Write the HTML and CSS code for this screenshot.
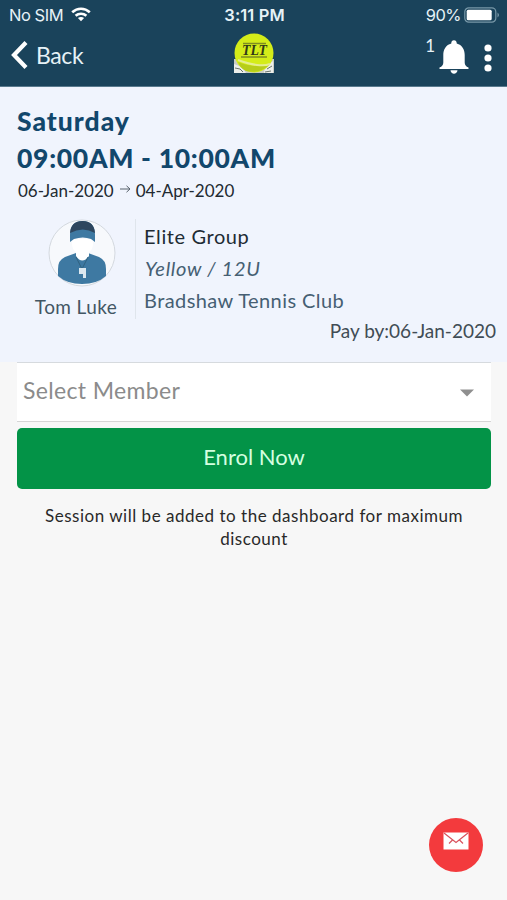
FILE: index.html
```html
<!DOCTYPE html>
<html lang="en">
<head>
<meta charset="utf-8">
<title>Session</title>
<link rel="stylesheet" href="styles.css">
</head>
<body>
<header class="top">
  <div class="status">
    <div class="carrier"><span class="nosim">No SIM</span>
      <svg width="20" height="15" viewBox="0 0 20 15" fill="none" stroke="#fff" stroke-width="2.6"><path d="M1.2 5.3C6.4.5 13.6.5 18.8 5.3M4.6 8.8c3.1-2.8 7.7-2.8 10.8 0"/><path d="M6.9 11.1c1.800-1.500 4.400-1.500 6.200 0L10 14.300z" fill="#fff" stroke="none"/></svg>
    </div>
    <span class="clock">3:11 PM</span>
    <div class="power"><span class="percent">90%</span>
      <svg width="36" height="16" viewBox="0 0 36 16"><rect x=".8" y=".8" width="31" height="14.4" rx="4" fill="none" stroke="#7898a8" stroke-width="1.2"/><rect x="2.7" y="2.7" width="25" height="10.6" rx="1.5" fill="#fff"/><path d="M33.5 5.500q3 2.500 0 5z" fill="#7898a8"/></svg>
    </div>
  </div>
  <nav class="nav">
    <a class="back"><svg width="17" height="30" viewBox="0 0 17 30"><path d="M15 2.500 3 15l12 12.500" fill="none" stroke="#fff" stroke-width="4.200"/></svg><span class="backtext">Back</span></a>
    <svg class="logo" width="42" height="42" viewBox="0 0 42 42">
      <path d="M1 26h40v14H1z" fill="#c9ccc5"/><path d="m1 31 8 3 4 6H1zM32 34l8-6v12h-9z" fill="#eceeea"/><path d="m2 35 5 1 3 3M34 36l5-3M32 39l6-1" stroke="#69746c" fill="none"/>
      <circle cx="21" cy="20" r="19.500" fill="#d4ec19"/><path d="M5 29q14 6 31 3-9 9-23 6-6-3-8-9z" fill="#b7cd1b"/><path d="M5 27q11 4 19 5 8 1 13-1" fill="none" stroke="#e5ed92" stroke-width="2"/>
      <path d="M10 10.500h23M8 24h26" stroke="#7f8d20" stroke-width="1.300"/>
      <text x="21.500" y="21.700" class="logotext" textLength="25" lengthAdjust="spacingAndGlyphs">TLT</text>
    </svg>
    <div class="actions"><span class="count">1</span>
      <svg width="30" height="36" viewBox="0 0 30 36" fill="#fff"><path d="M15 1.200c-1.700 0-2.700 1.200-2.700 2.700v.7C7 6 4.300 10.500 4.300 16v7.500q0 3.500-3.800 5v1.600h29v-1.600q-3.800-1.500-3.800-5V16c0-5.500-2.700-10-8-11.400v-.7c0-1.500-1-2.700-2.700-2.700zM11.500 31.300c.3 4.500 6.700 4.500 7 0z"/></svg>
      <svg class="dots" width="8" height="28" viewBox="0 0 8 28" fill="#fff"><circle cx="4" cy="4" r="3.600"/><circle cx="4" cy="14" r="3.600"/><circle cx="4" cy="24" r="3.600"/></svg>
    </div>
  </nav>
</header>
<main>
  <section class="session">
    <h1><span class="day">Saturday</span><span class="time">09:00AM - 10:00AM</span></h1>
    <div class="dates"><span>06-Jan-2020</span><svg width="12" height="10" viewBox="0 0 12 10"><path d="M1 5h10M7.500 1.800 11 5 7.500 8.200" fill="none" stroke="#59636d"/></svg><span>04-Apr-2020</span></div>
    <div class="details">
      <div class="coach">
        <svg width="68" height="68" viewBox="0 0 68 68">
          <circle cx="34" cy="34" r="33" fill="#f7f9fc" stroke="#d4d9df"/>
          <path d="M28 34 17 38q-7 3-7 12v7q9 8 24 8t24-8v-7q0-9-7-12l-11-4z" fill="#3e79a2"/>
          <path d="M24 20h21v5q0 5-4 8v4q-7 9-13 0v-4q-4-3-4-8z" fill="#fff"/><path d="M22 23v-7Q22 2 34.500 2T47 16v7l-4-3q-8-3-17 0z" fill="#3e79a2"/><path d="M22 14Q23 2 34.500 2T47 14q-12-7-25 0z" fill="#2e465e"/>
          <path d="m28 38 6 12 6-12" fill="none" stroke="#30617f"/><path d="M31 49h7v10h-3v-4h-4z" fill="#dce8f0"/>
        </svg>
        <span class="name">Tom Luke</span>
      </div>
      <div class="group"><span class="elite">Elite Group</span><em class="level">Yellow / 12U</em><span class="club">Bradshaw Tennis Club</span></div>
    </div>
    <div class="pay"><span>Pay by:06-Jan-2020</span></div>
  </section>
  <section class="enrol">
    <div class="select"><span>Select Member</span><svg width="14" height="8" viewBox="0 0 14 8"><path d="M0 .5h14L7 7.500z" fill="#8f8f8f"/></svg></div>
    <button class="button"><span>Enrol Now</span></button>
    <p class="note"><span>Session will be added to the dashboard for maximum</span><br>discount</p>
  </section>
</main>
<button class="mail" aria-label="Message"><svg width="26" height="18" viewBox="0 0 26 18"><path d="M.5.5h25v17H.5z" fill="#fff"/><path d="m1 1 12 9.500L25 1M6 11.500l4-4M20 11.500l-4-4" fill="none" stroke="#d9515c" stroke-width="1.200"/></svg></button>
</body>
</html>
```
FILE: styles.css
```css
* { box-sizing: border-box; }
body { margin: 0; min-height: 900px; background: #f7f7f7; font-family: Lato, "Open Sans", sans-serif; color: #222a31; }
svg { display: block; flex: none; }
span, em { white-space: nowrap; }
.top { height: 87px; background: #1a435b; color: #e6f2f7; border-bottom: 1px solid #597a8e; }
.status { height: 29px; display: grid; grid-template-columns: 1fr auto 1fr; align-items: center; padding: 0 7px 0 9px; font: 16.5px/20px Inter, sans-serif; }
.carrier, .power { display: flex; align-items: center; gap: 8px; }
.power { justify-content: flex-end; gap: 3px; }
.nosim { letter-spacing: -.45px; }
.percent { letter-spacing: -.5px; }
.clock { font-weight: 600; letter-spacing: .1px; }
.nav { height: 57px; display: grid; grid-template-columns: 1fr 42px 1fr; padding: 0 15px 0 11px; }
.back { display: flex; align-items: center; height: 51px; gap: 8px; font-size: 23px; letter-spacing: -.4px; }
.logo { margin: 4px 0 0 2px; }
.logotext { font: italic bold 15px "Liberation Serif", serif; fill: #303818; text-anchor: middle; }
.actions { display: flex; justify-content: flex-end; align-items: flex-start; padding-top: 10px; }
.count { font: 17px/16px Lato, sans-serif; margin: -1px 4px 0 0; }
.dots { margin: 5px 0 0 15px; }
.session { height: 275px; background: #f0f4fd; padding: 16px 11px 0 17px; }
h1 { margin: 0; font-size: 26.5px; line-height: 37px; font-weight: 900; color: #12476c; display: flex; flex-direction: column; align-items: flex-start; }
.day { letter-spacing: 1px; }
.time { letter-spacing: .7px; }
.dates { display: flex; align-items: center; height: 26px; gap: 5px; font-size: 17px; padding-left: 1px; }
.dates svg { margin-top: -3px; }
.details { display: flex; height: 101px; margin-top: 16px; }
.coach { width: 119px; display: flex; flex-direction: column; align-items: center; border-right: 1px solid #dfe5ec; height: 100px; }
.coach svg { margin-left: 12px; }
.name { font-size: 19px; line-height: 39px; color: #425664; letter-spacing: .4px; }
.group { padding: 1px 0 0 8px; display: flex; flex-direction: column; align-items: flex-start; font-size: 20px; line-height: 32px; color: #465f73; }
.elite { color: #1d2b34; letter-spacing: .6px; }
.level { letter-spacing: .7px; padding-left: 1px; }
.club { letter-spacing: .42px; }
.pay { display: flex; justify-content: flex-end; font-size: 19px; line-height: 22px; color: #414c55; }
.enrol { padding: 0 16px 0 17px; }
.select { height: 60px; background: #fff; border-top: 1px solid #d6dade; border-bottom: 1px solid #d5d5d5; display: flex; justify-content: space-between; align-items: center; padding: 0 17px 4px 6px; font-size: 23px; letter-spacing: .35px; color: #8b8b8b; }
.select svg { margin-top: 6px; }
.button { width: 100%; height: 61px; margin-top: 6px; padding: 0 0 5px; border: 0; border-radius: 5px; background: #039347; color: #d5ffe0; font: 22px Lato, sans-serif; display: block; }
.note { margin: 15px 0 0; text-align: center; font-size: 17px; line-height: 23px; letter-spacing: .52px; color: #292929; }
.mail { position: fixed; right: 24px; bottom: 28px; width: 54px; height: 54px; padding: 0 0 8px; border: 0; border-radius: 50%; background: #f33a3d; display: flex; align-items: center; justify-content: center; }
```
